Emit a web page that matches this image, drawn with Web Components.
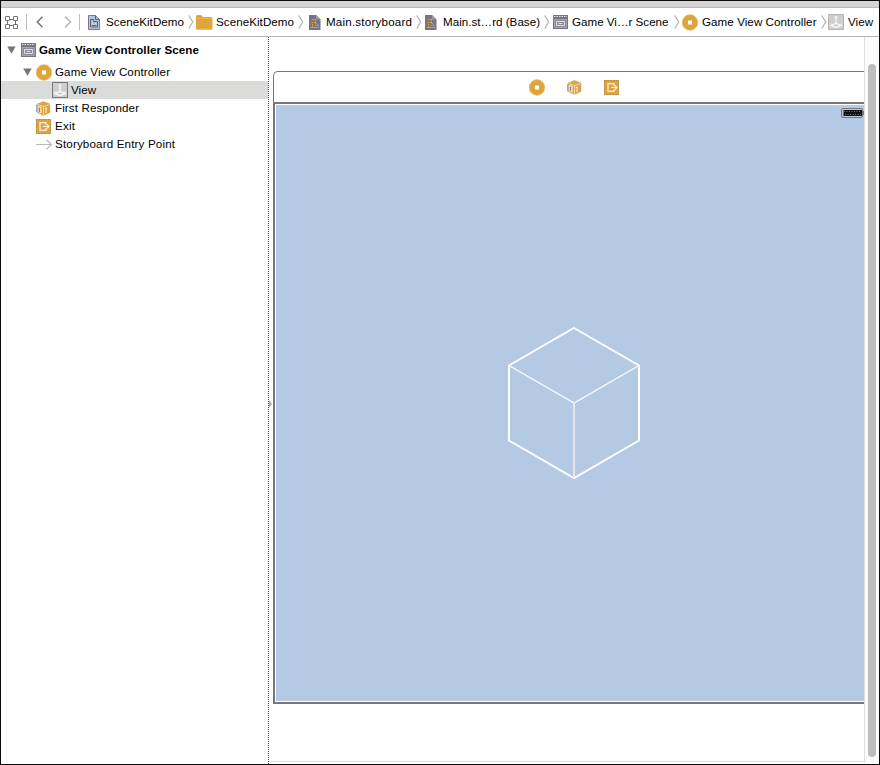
<!DOCTYPE html>
<html lang="en"><head><meta charset="utf-8"><title>Game View Controller Scene</title>
<style>html,body{margin:0;width:880px;height:765px;overflow:hidden;background:#fff}</style></head>
<body><ide-window></ide-window>
<script>
const icons = {
 grid:[14,13,'<g fill="none" stroke="#777580"><path d="M.5.5h4v4h-4zM8.500.5h4v4h-4zM.5 8.500h4v4h-4zM8.500 8.500h4v4h-4zM4.500 3.500h4M4.500 9.500h4M2.500 4.500v4M10.500 4.500v4"/></g>'],
 back:[8,12,'<path d="M6.500 .7 1.300 6l5.200 5.300" fill="none" stroke="#777580" stroke-width="1.600"/>'],
 forward:[8,12,'<path d="m1 .7 5.500 5.300L1 11.300" fill="none" stroke="#bbb" stroke-width="1.600"/>'],
 chevron:[6,14,'<path d="M.7.500 4.700 7l-4 6.500" fill="none" stroke="#b5b5b5" stroke-width="1.300"/>'],
 doc:[12,15,'<path d="M.5.5h7l4 4v10H.5z" fill="#b2c4de" stroke="#777a90"/><path d="M7.500.5v4h4M2.500 4.500h3M2.500 4.500v7.500h7V6.500h-4v-2M4 10.500 6 8l2 2.500z" fill="none" stroke="#596278"/><path d="M4 9h4" stroke="#fff"/>'],
 folder:[17,15,'<path d="M0 1.500Q0 0 1.500 0h3.500l2 2H15q1.500 0 1.500 1.500v10q0 1.300-1 1.300h-14q-1.500 0-1.500-1.300z" fill="#e0a43c"/><path d="M1 3.500h15M1 14h15" stroke="#e9c27e" stroke-dasharray="1 1"/>'],
 storyboard:[12,15,'<path d="M0 0h7L11.500 4.500V15H0z" fill="#777580"/><path d="M7 0v4.500h4.500" fill="#9d9ba3"/><g fill="none" stroke="#e0a43c" stroke-dasharray="1.500 .7"><path d="M3 4.500h3M2.500 7.500h4l3 3M3.500 9v3.500h6M6.500 4v5M2 12.500h8M6 10.500h3"/></g>'],
 scene:[15,14,'<path d="M0 0h15v14H0z" fill="#777580"/><path d="M1 1.500h13" stroke="#e6e5e8" stroke-dasharray="1.500 1"/><path d="M1.500 4.500h12v8h-12z" fill="#8b8993" stroke="#a8a6ae"/><path d="M3.500 6.500h8v4h-8z" fill="#8b8993" stroke="#e0dfe3"/><path d="M5.500 8.500h4" stroke="#e0dfe3"/>'],
 controller:[16,17,'<circle cx="8" cy="8.500" r="7.900" fill="#e0a43c" stroke="#e8ca91" stroke-width=".6"/><path d="M6 6.500h4v4H6z" fill="#fff"/>'],
 view:[16,16,'<path d="M.5.5h15v15H.5z" fill="#cececd" stroke="var(--edge,#b5b5b5)"/><path d="M8 3v7M3 11.500l5-2 5 2-5 2z" fill="none" stroke="#fff" stroke-width="1.200"/><path d="m6.500 4 1.500-2 1.500 2M3 9.500v2h2M13 9.500v2h-2" stroke="#f5f5f5" fill="none"/>'],
 responder:[15,15,'<path d="m7.500.5 6.500 2.500v8.500l-6.500 3L1 11.500V3z" fill="#e0a43c" stroke="#b7a078" stroke-width=".8" stroke-dasharray="1 1"/><path d="m1.500 3.500 6 2 6-2M7.500 5.500v8.500" fill="none" stroke="#f4e7cd" stroke-width=".8"/><path d="M2 5.500l3 1v5l-3-1zM3 8.500h2M10 7v5M9 7.500l2-.8" fill="none" stroke="#f2ede6" stroke-width="1.100"/><path d="M.8 4v7M3.500 7v4" stroke="#77737d" stroke-width=".8"/>'],
 exit:[15,15,'<path d="M0 0h15v15H0z" fill="#e0a43c"/><path d="M.5.5h14v14H.5z" fill="none" stroke="#8d7a62" stroke-dasharray="1 2"/><path d="M10 6V3.700H4v7.600h6V9M7 7.500h6M11 5.500l2 2-2 2" fill="none" stroke="#f3efe6" stroke-width="1.200"/>'],
 arrow:[17,11,'<path d="M0 5.500h15.500M10.500.7l5 4.800-5 4.800" fill="none" stroke="#b9b9b9" stroke-width="1.200"/>'],
 triangle:[9,8,'<path d="M.3.5h8.400L4.500 7.700z" fill="#777580"/>'],
 battery:[23,10,'<rect x=".5" y=".5" width="21" height="9" rx="1.500" fill="#b3c9e4" stroke="#777580"/><path d="M2.500 2h18.500v6H2.500z" fill="#101014"/><path d="M3 3.500h17M4 6.500h16" stroke="#777" stroke-dasharray="1 1.500"/><path d="M22.500 3v4" stroke="#777580"/>'],
 cube:[134,154,'<g fill="none" stroke="#fff"><path d="m67 2 65 37.500v75L67 152 2 114.500v-75z" stroke-width="2"/><path d="m2 39.500 65 37.500 65-37.500" stroke-width="1.200"/><path d="M67 77v75" stroke="#e8e6e5" stroke-width="2"/></g>']
};
customElements.define('ui-icon', class extends HTMLElement {
 connectedCallback(){
  const [w,h,body]=icons[this.getAttribute('name')];
  this.attachShadow({mode:'open'}).innerHTML=`<style>:host{display:block;flex:none;width:${w}px;height:${h}px}svg{display:block}</style><svg width="${w}" height="${h}" viewBox="0 0 ${w} ${h}">${body}</svg>`;
 }
});
/* Text tracked out to the width given in its "w" attribute. */
customElements.define('fit-text', class extends HTMLElement {
 connectedCallback(){
  const root=this.attachShadow({mode:'open'});
  root.innerHTML='<style>:host{display:block;flex:none;white-space:nowrap;line-height:14px}span{display:inline-block}</style><span><slot></slot></span>';
  const s=root.querySelector('span'), w=+this.getAttribute('w');
  this.style.width=w+'px';
  s.style.letterSpacing=((w-s.getBoundingClientRect().width)/(this.textContent.length-1))+'px';
 }
});
customElements.define('path-crumb', class extends HTMLElement {
 connectedCallback(){
  const a=n=>this.getAttribute(n);
  this.attachShadow({mode:'open'}).innerHTML=`<style>:host{display:grid;flex:none;grid-template-columns:${a('lead')}px ${a('w')}px auto;align-items:center;width:${a('span')}px}ui-icon[name=chevron]{margin-left:${a('gap')||4}px}</style><ui-icon name="${a('icon')}"></ui-icon><fit-text w="${a('w')}">${this.textContent}</fit-text>${a('last')!==null?'':'<ui-icon name="chevron"></ui-icon>'}`;
 }
});
customElements.define('jump-bar', class extends HTMLElement {
 connectedCallback(){
  this.attachShadow({mode:'open'}).innerHTML=`<style>:host{display:flex;align-items:center;box-sizing:border-box;height:29px;border-bottom:1px solid #b5b5b5;padding-left:4px;background:#fff}i{width:1px;height:16px;background:#bdbdbd;flex:none}nav{display:flex;align-items:center}.b{margin-left:9px}.f{margin:0 7px 0 20px}.s{margin-left:7px}nav{margin-left:8px}</style>
  <ui-icon name="grid"></ui-icon><i class="s"></i><ui-icon class="b" name="back"></ui-icon><ui-icon class="f" name="forward"></ui-icon><i></i>
  <nav><path-crumb icon="doc" lead="18" w="78" span="108">SceneKitDemo</path-crumb><path-crumb icon="folder" lead="20" w="78" span="113">SceneKitDemo</path-crumb><path-crumb icon="storyboard" lead="17" w="86" span="116">Main.storyboard</path-crumb><path-crumb icon="storyboard" lead="18" w="97" span="128">Main.st…rd (Base)</path-crumb><path-crumb icon="scene" lead="19" w="96.500" gap="5" span="129">Game Vi…r Scene</path-crumb><path-crumb icon="controller" lead="20" w="114.500" span="146">Game View Controller</path-crumb><path-crumb icon="view" lead="20" w="25" span="46" last>View</path-crumb></nav>`;
 }
});
customElements.define('tree-row', class extends HTMLElement {
 connectedCallback(){
  const a=n=>this.getAttribute(n), open=a('open')!==null, bold=a('bold')!==null, sel=a('selected')!==null;
  this.attachShadow({mode:'open'}).innerHTML=`<style>:host{display:flex;align-items:center;height:${bold?26:18}px;box-sizing:border-box;padding-left:${a('indent')}px;${sel?'background:#dbdbda;--edge:#777580;':''}${bold?'font-weight:bold;':''}}.t{width:14px;margin-right:${a('tgap')||0}px}.i{width:${a('lead')||19}px;flex:none}</style>${open?'<div class="t"><ui-icon name="triangle"></ui-icon></div>':''}<div class="i"><ui-icon name="${a('icon')}"></ui-icon></div><fit-text w="${a('w')}">${this.textContent}</fit-text>`;
 }
});
customElements.define('scene-outline', class extends HTMLElement {
 connectedCallback(){
  this.attachShadow({mode:'open'}).innerHTML=`<style>:host{display:block;box-sizing:border-box;width:268px;border-right:1px dotted #55535d}</style>
  <tree-row open bold indent="6" icon="scene" lead="18" w="160">Game View Controller Scene</tree-row><tree-row open indent="22" tgap="-1" icon="controller" lead="19" w="115">Game View Controller</tree-row><tree-row selected indent="51" icon="view" w="25">View</tree-row><tree-row indent="35" icon="responder" w="84">First Responder</tree-row><tree-row indent="35" icon="exit" w="20">Exit</tree-row><tree-row indent="35" icon="arrow" w="120">Storyboard Entry Point</tree-row>`;
 }
});
customElements.define('scene-canvas', class extends HTMLElement {
 connectedCallback(){
  this.attachShadow({mode:'open'}).innerHTML=`<style>:host{display:grid;grid-template-columns:595px 15px;position:relative}
  .main{box-sizing:border-box;padding:34px 0 0 4px;border-bottom:1px solid #ddd;height:725px}
  .dock{box-sizing:border-box;height:31px;border:1px solid #777580;border-width:1px 0 0 1px;border-radius:5px 0 0 0;display:flex;justify-content:center;align-items:center;gap:22px;padding-left:10px}
  .phone{box-sizing:border-box;height:602px;border:solid #777580;border-width:2px 0 2px 2px;padding:1px 0 1px 1px}
  .view{box-sizing:border-box;height:596px;background:#b3c9e4;display:grid;grid-template-rows:14px 1fr;box-shadow:inset 0 1px #c3cbd5,inset 0 -1px #c3cbd5}
  .battery{justify-self:end;margin:3px 0 0}.cube{place-self:center;margin:0 0 14px 8px}
  .scroll{box-sizing:border-box;border-left:1px solid #dedede;background:#fbfbfb;padding:27px 0 0 3px;height:726px}
  .thumb{width:8px;height:693px;border-radius:4px;background:#bdbdbc}
  .split{position:absolute;left:0;top:363px;border:solid transparent;border-width:4px 0 4px 3px;border-left-color:#aaa}</style>
  <div class="main"><div class="dock"><ui-icon name="controller"></ui-icon><ui-icon name="responder"></ui-icon><ui-icon name="exit"></ui-icon></div><div class="phone"><div class="view"><ui-icon class="battery" name="battery"></ui-icon><ui-icon class="cube" name="cube"></ui-icon></div></div></div><div class="scroll"><div class="thumb"></div></div><div class="split"></div>`;
 }
});
customElements.define('ide-window', class extends HTMLElement {
 connectedCallback(){
  this.attachShadow({mode:'open'}).innerHTML=`<style>:host{display:block;box-sizing:border-box;width:880px;height:765px;border:1px solid #0c0a0c;background:#fff;color:#000;font:11.600px "Liberation Sans",Arial,sans-serif;overflow:hidden}.top{box-sizing:border-box;height:7px;background:#d5d3d3;border-bottom:1px solid #b8b8b8}.body{display:grid;grid-template-columns:268px 610px;height:727px}</style><div class="top"></div><jump-bar></jump-bar><div class="body"><scene-outline></scene-outline><scene-canvas></scene-canvas></div>`;
 }
});
</script></body></html>
